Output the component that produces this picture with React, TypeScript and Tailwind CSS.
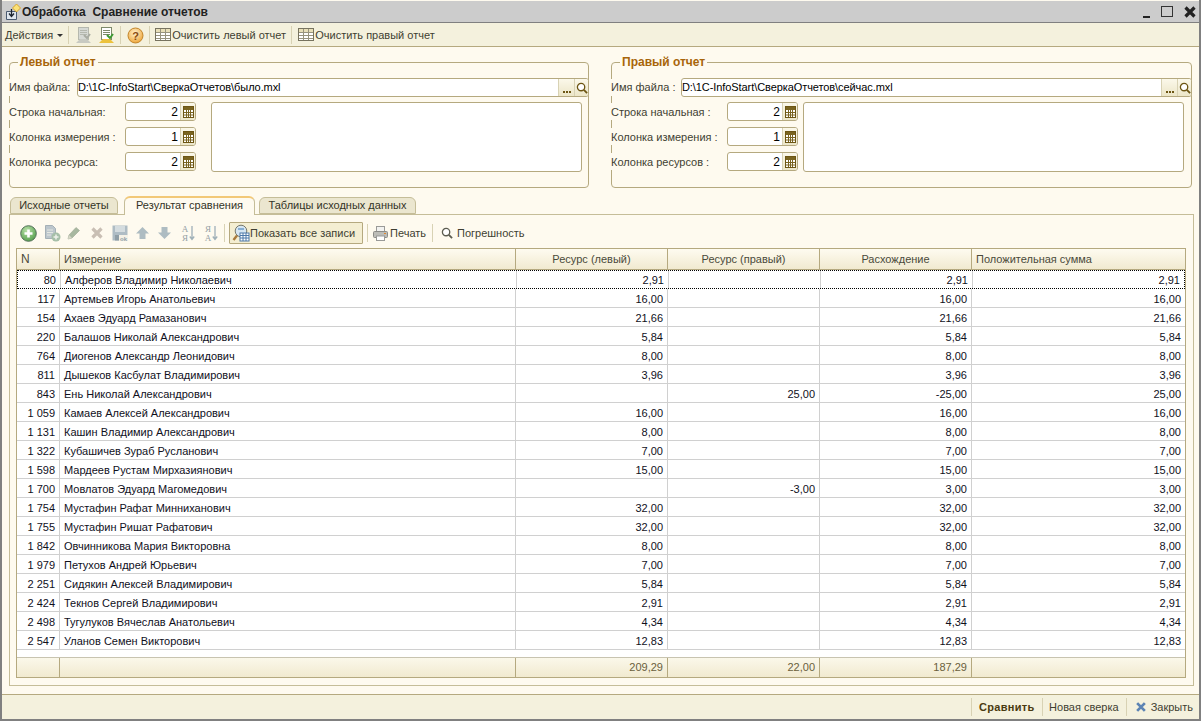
import type { ReactNode } from 'react';

type Row = [string, string, string, string, string, string];

const rows: Row[] = [
  ['80', 'Алферов Владимир Николаевич', '2,91', '', '2,91', '2,91'],
  ['117', 'Артемьев Игорь Анатольевич', '16,00', '', '16,00', '16,00'],
  ['154', 'Ахаев Эдуард Рамазанович', '21,66', '', '21,66', '21,66'],
  ['220', 'Балашов Николай Александрович', '5,84', '', '5,84', '5,84'],
  ['764', 'Диогенов Александр Леонидович', '8,00', '', '8,00', '8,00'],
  ['811', 'Дышеков Касбулат Владимирович', '3,96', '', '3,96', '3,96'],
  ['843', 'Ень Николай Александрович', '', '25,00', '-25,00', '25,00'],
  ['1 059', 'Камаев Алексей Александрович', '16,00', '', '16,00', '16,00'],
  ['1 131', 'Кашин Владимир Александрович', '8,00', '', '8,00', '8,00'],
  ['1 322', 'Кубашичев Зураб Русланович', '7,00', '', '7,00', '7,00'],
  ['1 598', 'Мардеев Рустам Мирхазиянович', '15,00', '', '15,00', '15,00'],
  ['1 700', 'Мовлатов Эдуард Магомедович', '', '-3,00', '3,00', '3,00'],
  ['1 754', 'Мустафин Рафат Минниханович', '32,00', '', '32,00', '32,00'],
  ['1 755', 'Мустафин Ришат Рафатович', '32,00', '', '32,00', '32,00'],
  ['1 842', 'Овчинникова Мария Викторовна', '8,00', '', '8,00', '8,00'],
  ['1 979', 'Петухов Андрей Юрьевич', '7,00', '', '7,00', '7,00'],
  ['2 251', 'Сидякин Алексей Владимирович', '5,84', '', '5,84', '5,84'],
  ['2 424', 'Текнов Сергей Владимирович', '2,91', '', '2,91', '2,91'],
  ['2 498', 'Тугулуков Вячеслав Анатольевич', '4,34', '', '4,34', '4,34'],
  ['2 547', 'Уланов Семен Викторович', '12,83', '', '12,83', '12,83'],
];

function Sep() {
  return <div className="h-[18px] w-px bg-[#d8d2b4]" />;
}

function TableIcon() {
  return (
    <svg width="16" height="14" viewBox="0 0 16 14" className="shrink-0">
      <rect x="0.5" y="0.5" width="15" height="12" fill="#fff" stroke="#77735f" />
      <rect x="1" y="1" width="14" height="3" fill="#e8dfb8" />
      <path d="M1 4.5h14M1 7.5h14M1 10.5h14M5.5 1v11M10.5 1v11" stroke="#97937e" fill="none" />
    </svg>
  );
}

function CalcIcon() {
  return (
    <svg width="11" height="12" viewBox="0 0 11 12">
      <rect x="0.5" y="0.5" width="10" height="11" fill="#fff" stroke="#6d5614" />
      <rect x="1" y="1" width="9" height="3" fill="#7a6420" />
      <path d="M1 6.5h9M1 9h9M3.5 4v7M5.5 4v7M7.5 4v7" stroke="#7a6420" fill="none" />
    </svg>
  );
}

function MagnifierIcon({ color = '#6d5614', size = 13 }: { color?: string; size?: number }) {
  return (
    <svg width={size} height={size} viewBox="0 0 13 13" className="shrink-0">
      <circle cx="5.5" cy="5.5" r="4" fill="#fff" stroke={color} strokeWidth="1.4" />
      <path d="M8.5 8.5L12 12" stroke={color} strokeWidth="2" />
    </svg>
  );
}

function TitleIcon() {
  return (
    <svg width="16" height="18" viewBox="0 0 16 18" className="shrink-0">
      <path d="M1.5 8.5h10v8h-10z" fill="#dfe6ee" stroke="#4a5a70" />
      <path d="M6.5 6v7M4 10.5l2.5 3 2.5-3" fill="none" stroke="#1c2430" strokeWidth="1.3" />
      <path d="M11.5 1l4 4-4 4-4-4z" fill="#fbe278" stroke="#d8a52c" />
    </svg>
  );
}

function DocsIcon({ active }: { active: boolean }) {
  const line = active ? '#7d8a6a' : '#b5b8ae';
  return (
    <svg width="17" height="17" viewBox="0 0 17 17" className="shrink-0">
      <rect x="3.5" y="0.5" width="10" height="12" fill={active ? '#fff' : '#d6d9d4'} stroke={line} />
      <path d="M5 3.5h7M5 5.5h7M5 7.5h7" stroke={line} />
      <path d="M1 16l4-4h7l4 4z" fill={active ? '#ecc23c' : '#c8cac2'} />
      <path d="M9 8l3 3 3-4" fill="none" stroke={active ? '#3c9a32' : '#a9aca2'} strokeWidth="2" />
    </svg>
  );
}

function HelpIcon() {
  return (
    <svg width="17" height="17" viewBox="0 0 17 17" className="shrink-0">
      <defs>
        <radialGradient id="help" cx="0.45" cy="0.35" r="0.7">
          <stop offset="0" stopColor="#fff2d0" />
          <stop offset="1" stopColor="#eda12f" />
        </radialGradient>
      </defs>
      <circle cx="8.5" cy="8.5" r="7.5" fill="url(#help)" stroke="#c2852c" />
      <text x="8.5" y="12.5" textAnchor="middle" fontSize="11" fontWeight="700" fontFamily="Liberation Sans, sans-serif" fill="#8a4a10">?</text>
    </svg>
  );
}

function PlusIcon() {
  return (
    <svg width="17" height="17" viewBox="0 0 17 17" className="shrink-0">
      <defs>
        <radialGradient id="plus" cx="0.4" cy="0.3" r="0.8">
          <stop offset="0" stopColor="#b8e0a8" />
          <stop offset="1" stopColor="#4c9a44" />
        </radialGradient>
      </defs>
      <circle cx="8.5" cy="8.5" r="7.8" fill="url(#plus)" stroke="#55705a" />
      <path d="M8.5 4.5v8M4.5 8.5h8" stroke="#fff" strokeWidth="2.6" />
    </svg>
  );
}

function DocPlusIcon() {
  return (
    <svg width="17" height="17" viewBox="0 0 17 17" className="shrink-0">
      <path d="M1.5 0.5h7l3 3v10h-10z" fill="#bcc6cc" stroke="#a5b0b6" />
      <path d="M3 5h6M3 7.5h6M3 10h4" stroke="#e6e8e2" />
      <circle cx="12" cy="12" r="4.5" fill="#a6bfa8" />
      <path d="M12 9.5v5M9.5 12h5" stroke="#eef2ea" strokeWidth="1.5" />
    </svg>
  );
}

function PencilIcon() {
  return (
    <svg width="14" height="14" viewBox="0 0 14 14" className="shrink-0">
      <path d="M1 13l1-4 7-7.5 3.5 3L5 12z" fill="#a8b8a0" stroke="#98a490" strokeWidth="0.6" />
      <path d="M1 13l1-4 3 3z" fill="#d8d8c8" />
    </svg>
  );
}

function CrossIcon({ color = '#c9bfb4', size = 14 }: { color?: string; size?: number }) {
  return (
    <svg width={size} height={size} viewBox="0 0 14 14" className="shrink-0">
      <path d="M2.5 2.5l9 9M11.5 2.5l-9 9" stroke={color} strokeWidth="3.2" />
    </svg>
  );
}

function FloppyIcon() {
  return (
    <svg width="16" height="16" viewBox="0 0 16 16" className="shrink-0">
      <rect x="0.5" y="0.5" width="15" height="15" fill="#aebcc4" />
      <rect x="3" y="1" width="10" height="6" fill="#d4dcdf" />
      <rect x="3" y="10" width="4" height="5.5" fill="#8f9ea6" />
      <rect x="7" y="10" width="9" height="6" fill="#f4f1e6" />
      <text x="11.5" y="15.5" textAnchor="middle" fontSize="6" fontWeight="700" fontFamily="Liberation Sans, sans-serif" fill="#8f9ea6">ok</text>
    </svg>
  );
}

function ArrowIcon({ up }: { up: boolean }) {
  return (
    <svg width="15" height="14" viewBox="0 0 15 14" className="shrink-0">
      <path d={up ? 'M7.5 1L14 7.5h-3.5V13h-6V7.5H1z' : 'M7.5 13L14 6.5h-3.5V1h-6v5.5H1z'} fill="#aebcc2" />
    </svg>
  );
}

function SortIcon({ first, second }: { first: string; second: string }) {
  return (
    <svg width="14" height="18" viewBox="0 0 14 18" className="shrink-0">
      <text x="4" y="8" textAnchor="middle" fontSize="9" fontFamily="Liberation Serif, serif" fill="#93a0a4">{first}</text>
      <text x="4" y="17" textAnchor="middle" fontSize="9" fontFamily="Liberation Serif, serif" fill="#93a0a4">{second}</text>
      <path d="M11 2v13M8.8 12.5l2.2 3 2.2-3" fill="none" stroke="#9fb0b8" strokeWidth="1.3" />
    </svg>
  );
}

function ShowAllIcon() {
  return (
    <svg width="18" height="18" viewBox="0 0 18 18" className="shrink-0">
      <path d="M5 11.5L1.5 16" stroke="#a87a3c" strokeWidth="2.4" />
      <circle cx="9" cy="7" r="5.8" fill="#d6e6f2" stroke="#76786c" />
      <rect x="8" y="9" width="9" height="8" fill="#fff" stroke="#4c78a8" />
      <path d="M8 11.5h9M8 14h9M11 9v8M14 9v8" stroke="#4c78a8" />
      <path d="M6 5h6" stroke="#6e9cc8" strokeWidth="1.5" />
    </svg>
  );
}

function PrinterIcon() {
  return (
    <svg width="15" height="15" viewBox="0 0 15 15" className="shrink-0">
      <rect x="3.5" y="0.5" width="8" height="5" fill="#f2f2f0" stroke="#9a9a98" />
      <rect x="0.5" y="5.5" width="14" height="6" rx="1" fill="#bdbdb8" stroke="#8c8c88" />
      <rect x="3.5" y="10" width="8" height="4.5" fill="#fff" stroke="#9a9a98" />
      <rect x="11" y="7" width="2" height="1" fill="#e0862c" />
    </svg>
  );
}

function Spinner({ value }: { value: string }) {
  return (
    <div className="flex h-[19px] w-[71px] overflow-hidden rounded-[3px] border border-[#b5a97f] bg-white">
      <div className="flex-1 pr-[2px] text-right text-[12px] leading-[18px] text-black">{value}</div>
      <div className="flex w-[15px] items-center justify-center border-l border-[#d8d2b4] bg-gradient-to-b from-[#fbf8ea] to-[#ece6c8]">
        <CalcIcon />
      </div>
    </div>
  );
}

function Group(props: {
  title: string;
  file: string;
  fileLabel: string;
  labels: string[];
  className: string;
  areaClass: string;
  fileLabelClass: string;
}) {
  const values = ['2', '1', '2'];
  return (
    <fieldset className={`${props.className} h-[133px] shrink-0 rounded-[4px] border border-[#b5a97f]`}>
      <legend className="ml-[8px] px-[2px] text-[12px] leading-[14px] font-bold text-[#a8650a]">{props.title}</legend>
      <div className="-mx-px mt-[9px] flex h-[19px] items-center">
        <div className={`${props.fileLabelClass} shrink-0 bg-[#fefaef]`}>{props.fileLabel}</div>
        <div className="flex h-[19px] min-w-0 flex-1 overflow-hidden rounded-[3px] border border-[#b5a97f] bg-white">
          <div className="flex-1 leading-[17px] tracking-[-0.08px] text-black">{props.file}</div>
          <div className="flex w-[16px] items-end justify-center border-l border-[#d8d2b4] bg-gradient-to-b from-[#fbf8ea] to-[#ece6c8] pb-[3px]">
            <div className="flex gap-[1px]">
              <span className="h-[2px] w-[2px] bg-[#6d5614]" />
              <span className="h-[2px] w-[2px] bg-[#6d5614]" />
              <span className="h-[2px] w-[2px] bg-[#6d5614]" />
            </div>
          </div>
          <div className="flex w-[14px] items-center justify-center border-l border-[#d8d2b4] bg-gradient-to-b from-[#fbf8ea] to-[#ece6c8]">
            <MagnifierIcon size={12} />
          </div>
        </div>
      </div>
      <div className="-ml-px mt-[5px] flex items-start">
        <div className="flex flex-col gap-[6px]">
          {props.labels.map((label, i) => (
            <div key={label} className="flex h-[19px] items-center">
              <div className="w-[116px] bg-[#fefaef] pt-px">{label}</div>
              <Spinner value={values[i]} />
            </div>
          ))}
        </div>
        <div className={`${props.areaClass} h-[70px] rounded-[3px] border border-[#b5a97f] bg-white`} />
      </div>
    </fieldset>
  );
}

function Tab({ children, active, className }: { children: ReactNode; active?: boolean; className: string }) {
  return (
    <div
      className={`${className} rounded-t-[6px] border border-[#c5bd98] text-center text-[#333327] ${
        active
          ? 'z-10 -mb-px h-[19px] border-b-0 border-t-2 border-t-[#f2c878] bg-[#fefaef] leading-[15px]'
          : 'h-[17px] bg-[#ebe6cf] leading-[15px]'
      }`}
    >
      {children}
    </div>
  );
}

function HeaderCell({ children, className }: { children?: ReactNode; className: string }) {
  return <div className={`${className} h-full shrink-0 border-r border-[#b5a97f]`}>{children}</div>;
}

function DataRow({ row, current }: { row: Row; current: boolean }) {
  const cell = 'h-full shrink-0 border-r border-[#d0d0d0]';
  return (
    <div
      className={`flex h-[19px] text-[#10101c] ${
        current ? 'border border-dotted border-black leading-[18px]' : 'border-b border-[#d0d0d0] leading-[20px]'
      }`}
    >
      <div className={`${cell} w-[43px] pr-[4px] text-right`}>{row[0]}</div>
      <div className={`${cell} w-[456px] pl-[4px]`}>{row[1]}</div>
      <div className={`${cell} w-[152px] pr-[4px] text-right`}>{row[2]}</div>
      <div className={`${cell} w-[152px] pr-[4px] text-right`}>{row[3]}</div>
      <div className={`${cell} w-[152px] pr-[4px] text-right`}>{row[4]}</div>
      <div className="h-full flex-1 pr-[4px] text-right">{row[5]}</div>
    </div>
  );
}

export default function App() {
  return (
    <div className="h-[722px] w-[1202px] overflow-hidden bg-white">
      <div className="flex h-[721px] w-[1201px] flex-col border-x-2 border-b-2 border-[#808080] bg-[#fefaef] font-['Liberation_Sans',sans-serif] text-[11px] text-[#3f3f32]">
        {/* заголовок окна */}
        <div className="mt-px flex h-[21px] shrink-0 items-center bg-[#cccccc] pr-[2px] pl-[3px]">
          <TitleIcon />
          <div className="ml-px text-[12px] font-bold whitespace-pre text-[#222]">Обработка  Сравнение отчетов</div>
          <div className="ml-auto flex items-center gap-[10px]">
            <div className="mt-[10px] mr-[1px] h-[2px] w-[7px] bg-[#222]" />
            <div className="h-[11px] w-[12px] border border-[#333]" />
            <CrossIcon color="#222" size={14} />
          </div>
        </div>

        {/* командная панель */}
        <div className="flex h-[25px] shrink-0 items-center border-y border-y-[#b5a97f] border-t-[#808080] bg-[#f4f1dd] pt-px pl-[3px]">
          <span>Действия</span>
          <span className="ml-[4px] h-0 w-0 border-x-[3px] border-t-[3px] border-x-transparent border-t-[#333]" />
          <div className="ml-[5px]"><Sep /></div>
          <div className="ml-[6px]"><DocsIcon active={false} /></div>
          <div className="ml-[6px]"><DocsIcon active /></div>
          <div className="ml-[5px]"><Sep /></div>
          <div className="ml-[6px]"><HelpIcon /></div>
          <div className="ml-[5px]"><Sep /></div>
          <div className="ml-[5px]"><TableIcon /></div>
          <span className="ml-[1px] w-[119px]">Очистить левый отчет</span>
          <Sep />
          <div className="ml-[6px]"><TableIcon /></div>
          <span className="ml-[1px]">Очистить правый отчет</span>
        </div>

        {/* настройки отчетов */}
        <div className="flex shrink-0 gap-[22px] pt-[8px] pl-[7px]">
          <Group
            className="w-[580px]"
            areaClass="ml-[15px] w-[371px]"
            fileLabelClass="w-[68px]"
            title="Левый отчет"
            fileLabel="Имя файла:"
            file="D:\1C-InfoStart\СверкаОтчетов\было.mxl"
            labels={['Строка начальная:', 'Колонка измерения :', 'Колонка ресурса:']}
          />
          <Group
            className="w-[581px]"
            areaClass="ml-[5px] w-[381px]"
            fileLabelClass="w-[70px]"
            title="Правый отчет"
            fileLabel="Имя файла :"
            file="D:\1C-InfoStart\СверкаОтчетов\сейчас.mxl"
            labels={['Строка начальная :', 'Колонка измерения :', 'Колонка ресурсов :']}
          />
        </div>

        {/* закладки */}
        <div className="mt-[7px] flex h-[19px] shrink-0 items-end pl-[8px]">
          <Tab className="w-[108px]">Исходные отчеты</Tab>
          <Tab active className="ml-[6px] w-[131px]">Результат сравнения</Tab>
          <Tab className="ml-[4px] w-[157px]">Таблицы исходных данных</Tab>
        </div>

        <div className="ml-[7px] flex h-[472px] w-[1185px] shrink-0 flex-col border border-[#c5bd98] pl-[6px]">
          {/* панель таблицы */}
          <div className="mt-[7px] flex h-[22px] shrink-0 items-center pl-[4px]">
            <PlusIcon />
            <div className="ml-[7px]"><DocPlusIcon /></div>
            <div className="ml-[6px]"><PencilIcon /></div>
            <div className="ml-[9px]"><CrossIcon /></div>
            <div className="ml-[8px]"><FloppyIcon /></div>
            <div className="ml-[7px]"><ArrowIcon up /></div>
            <div className="ml-[7px]"><ArrowIcon up={false} /></div>
            <div className="ml-[9px]"><SortIcon first="А" second="Я" /></div>
            <div className="ml-[9px]"><SortIcon first="Я" second="А" /></div>
            <div className="ml-[6px]"><Sep /></div>
            <div className="ml-[4px] flex h-[22px] w-[134px] items-center rounded-[1px] border border-[#b5a97f] bg-[#f4eed2] pl-[2px]">
              <ShowAllIcon />
              <span>Показать все записи</span>
            </div>
            <div className="ml-[4px]"><Sep /></div>
            <div className="ml-[5px]"><PrinterIcon /></div>
            <span className="ml-[2px] w-[42px]">Печать</span>
            <Sep />
            <div className="ml-[8px]"><MagnifierIcon color="#5c5c50" size={12} /></div>
            <span className="ml-[4px]">Погрешность</span>
          </div>

          {/* таблица */}
          <div className="mt-[4px] flex h-[430px] w-[1170px] flex-col border border-[#b5a97f] bg-white">
            <div className="flex h-[21px] shrink-0 border-b border-[#b5a97f] bg-gradient-to-b from-[#fefbf0] to-[#f1ead0] leading-[20px] text-[#4a4a3a]">
              <HeaderCell className="w-[43px] pl-[4px] text-[12px]">N</HeaderCell>
              <HeaderCell className="w-[456px] pl-[4px]">Измерение</HeaderCell>
              <HeaderCell className="w-[152px] text-center">Ресурс (левый)</HeaderCell>
              <HeaderCell className="w-[152px] text-center">Ресурс (правый)</HeaderCell>
              <HeaderCell className="w-[152px] text-center">Расхождение</HeaderCell>
              <div className="flex-1 pl-[4px]">Положительная сумма</div>
            </div>
            <div className="min-h-0 flex-1">
              {rows.map((row, i) => (
                <DataRow key={row[0]} row={row} current={i === 0} />
              ))}
            </div>
            <div className="flex h-[20px] shrink-0 border-t border-[#c8c4b0] bg-gradient-to-b from-[#fbf8ea] to-[#f1ead0] leading-[18px] text-[#6a5f3c]">
              <HeaderCell className="w-[43px]" />
              <HeaderCell className="w-[456px]" />
              <HeaderCell className="w-[152px] pr-[4px] text-right">209,29</HeaderCell>
              <HeaderCell className="w-[152px] pr-[4px] text-right">22,00</HeaderCell>
              <HeaderCell className="w-[152px] pr-[4px] text-right">187,29</HeaderCell>
              <div className="flex-1" />
            </div>
          </div>
        </div>

        {/* нижняя панель */}
        <div className="mt-auto flex h-[25px] shrink-0 items-center justify-end border-t border-[#b5a97f] bg-[#f4f1dd] pr-[6px]">
          <Sep />
          <span className="ml-[7px] w-[56px] font-bold tracking-[0.3px] text-[#4a3a10]">Сравнить</span>
          <div className="ml-[7px]"><Sep /></div>
          <span className="ml-[6px]">Новая сверка</span>
          <div className="ml-[7px]"><Sep /></div>
          <div className="ml-[8px]"><CrossIcon color="#5c84b4" size={12} /></div>
          <span className="ml-[4px]">Закрыть</span>
        </div>
      </div>
    </div>
  );
}
